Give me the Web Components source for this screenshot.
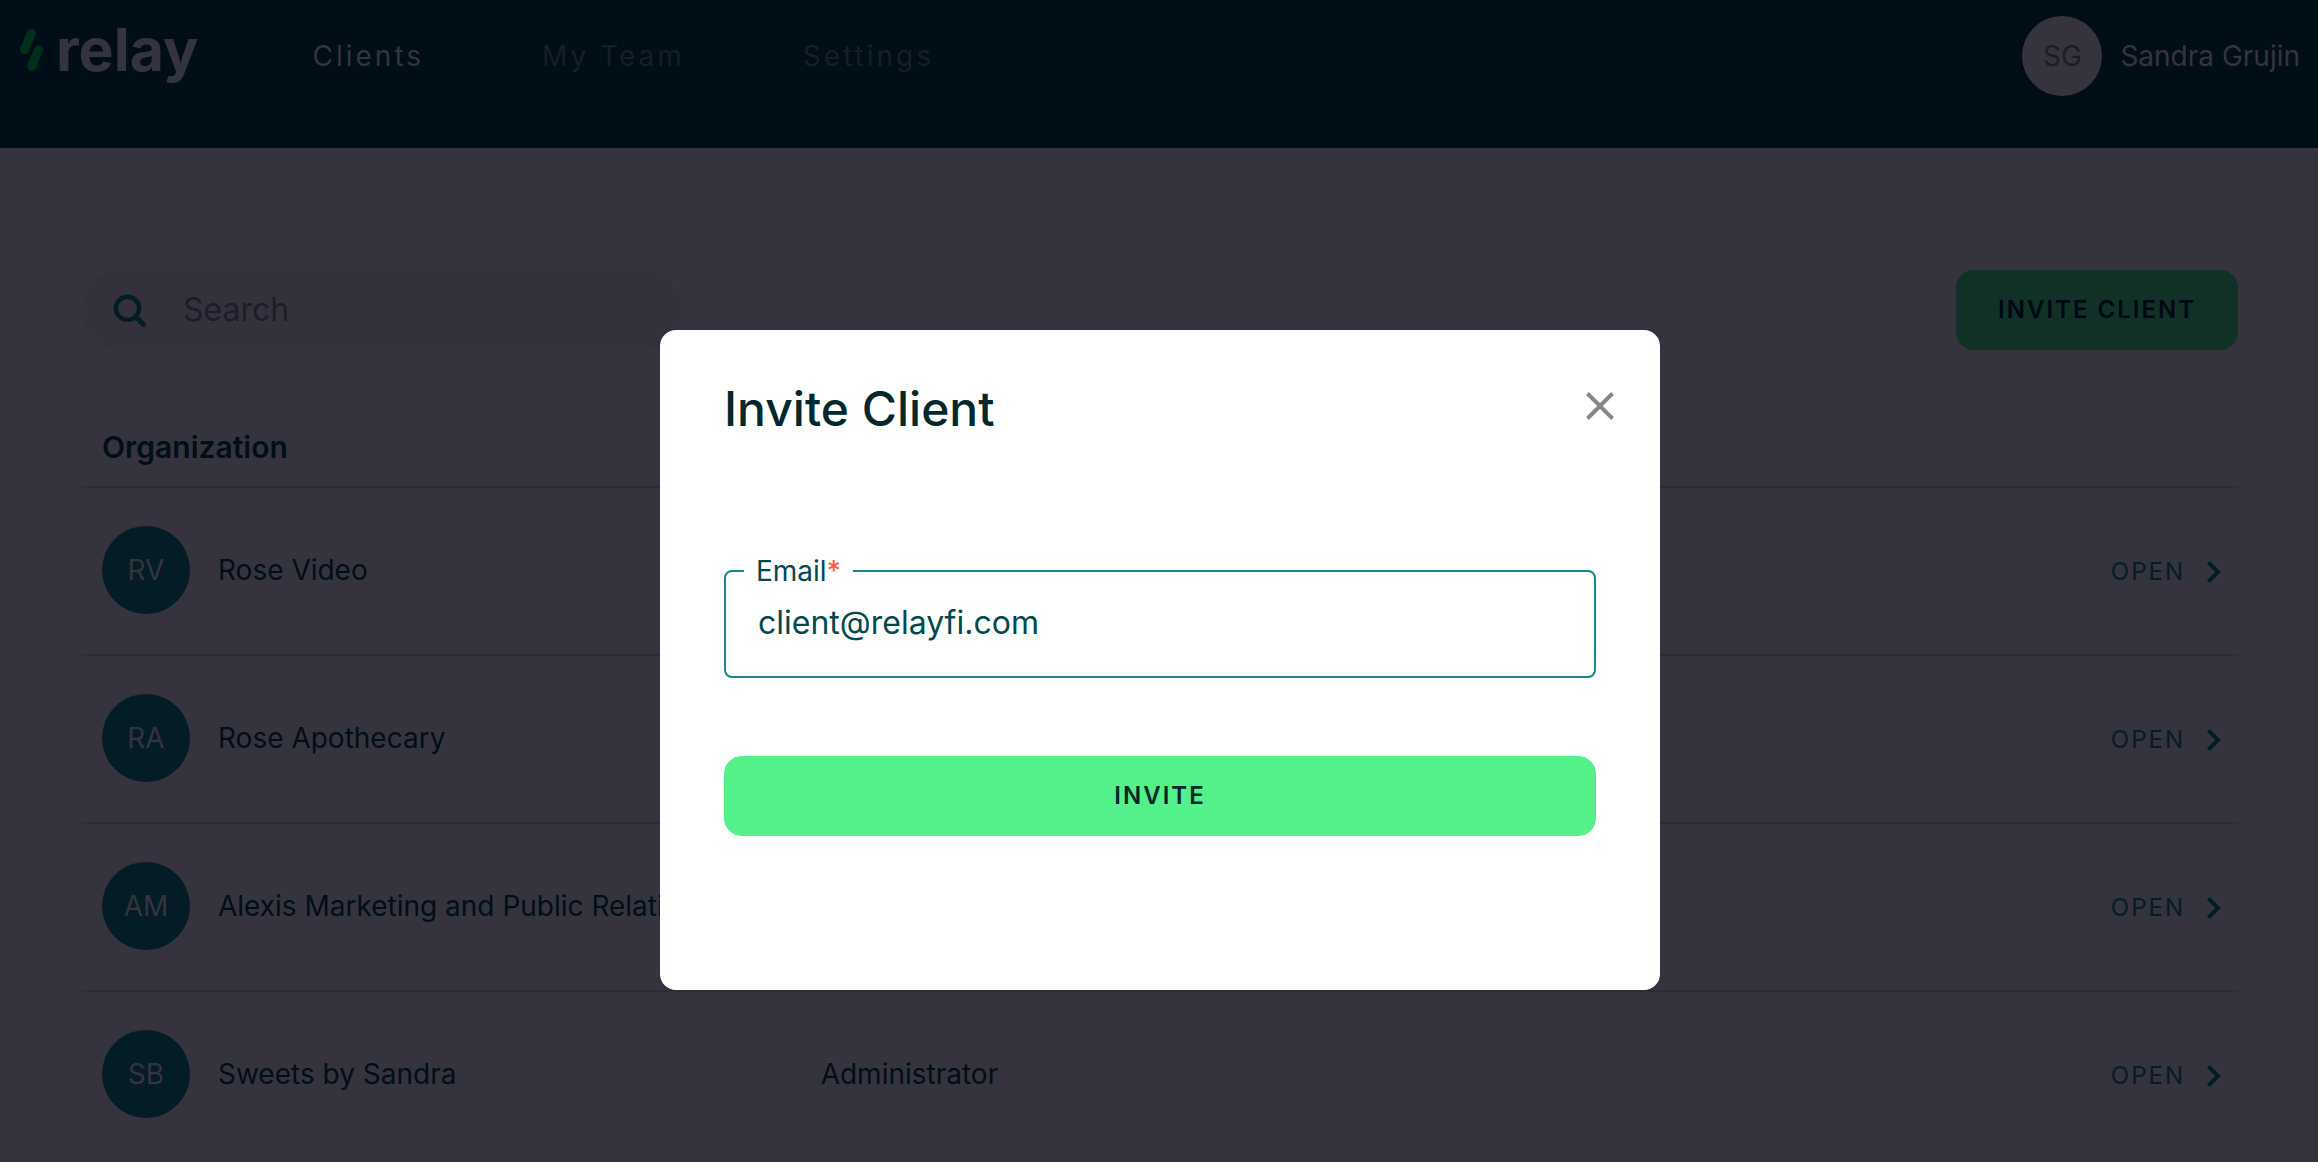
<!DOCTYPE html>
<html lang="en">
<head>
<meta charset="utf-8">
<title>Relay – Clients</title>
<style>
  :root {
    --page: #35343e;
    --header: #000e17;
    --line: #2d2c39;
    --field: #33323c;
    --ink: #000e18;
    --teal: #031c25;
    --muted: #1d1c28;
    --nav-idle: #161f29;
    --mark: #00301c;
    --cta: #113127;
    --cta-ink: #000815;
  }
  html, body { height: 100%; }
  body {
    margin: 0;
    overflow: hidden;
    background: var(--page);
    color: var(--ink);
    font: 28px/34px Inter, "Liberation Sans", sans-serif;
  }
</style>
</head>
<body>
<relay-app>
  <relay-header slot="header" user="Sandra Grujin" initials="SG">
    <relay-nav-link href="#clients" current>Clients</relay-nav-link>
    <relay-nav-link href="#team">My Team</relay-nav-link>
    <relay-nav-link href="#settings">Settings</relay-nav-link>
  </relay-header>
  <relay-card>
    <relay-toolbar>
      <relay-search></relay-search>
      <relay-button slot="action">INVITE CLIENT</relay-button>
    </relay-toolbar>
    <relay-client-table></relay-client-table>
  </relay-card>
  <relay-invite-dialog slot="dialog" heading="Invite Client"></relay-invite-dialog>
</relay-app>

<script>
  function define(name, render) {
    customElements.define(name, class extends HTMLElement {
      constructor() {
        super();
        this.attachShadow({ mode: "open" });
      }
      connectedCallback() {
        this.shadowRoot.innerHTML = "<style>*{box-sizing:border-box}</style>" + render(this);
      }
    });
  }

  define("relay-app", () => `
    <style>
      :host { display: flex; flex-direction: column; height: 100vh; }
      main { flex: 1; min-height: 0; overflow: hidden; padding: 60px 18px 0 20px; }
    </style>
    <slot name="header"></slot>
    <main><slot></slot></main>
    <slot name="dialog"></slot>`);

  define("relay-logo", () => `
    <style>
      :host { display: block; padding-bottom: 12px; }
      a { display: flex; align-items: center; gap: 12px; color: var(--page); text-decoration: none;
          font-size: 59px; line-height: 68px; font-weight: 700; }
      svg { display: block; }
    </style>
    <a href="#home">
      <svg width="24" height="44" viewBox="0 0 24 44" aria-hidden="true" fill="none" stroke="var(--mark)" stroke-width="9" stroke-linecap="round">
        <path d="M11.400 5.500 4.600 21.800M18.500 22.300 11.700 38.600"/>
      </svg>
      <span>relay</span>
    </a>`);

  define("relay-nav-link", el => `
    <style>
      :host { display: block; }
      a { color: ${el.hasAttribute("current") ? "var(--page)" : "var(--nav-idle)"}; text-decoration: none; letter-spacing: 3px; white-space: nowrap; }
    </style>
    <a href="${el.getAttribute("href")}"><slot></slot></a>`);

  define("relay-avatar", () => `
    <style>
      :host { display: flex; flex: none; align-items: center; justify-content: center;
              width: 88px; height: 88px; border-radius: 50%; background: var(--teal); color: var(--page); }
      :host([tone="light"]) { width: 80px; height: 80px; background: var(--page); color: var(--muted); }
    </style>
    <slot></slot>`);

  define("relay-header", el => `
    <style>
      :host { display: block; background: var(--header); color: var(--page); }
      header { padding: 16px 18px 52px 20px; }
      .row { display: flex; align-items: center; height: 80px; }
      nav { display: flex; gap: 118px; margin-left: 114px; }
      .user { display: flex; align-items: center; gap: 18px; margin-left: auto; }
    </style>
    <header>
      <div class="row">
        <relay-logo></relay-logo>
        <nav aria-label="Main"><slot></slot></nav>
        <div class="user">
          <relay-avatar tone="light">${el.getAttribute("initials")}</relay-avatar>
          <span>${el.getAttribute("user")}</span>
        </div>
      </div>
    </header>`);

  define("relay-card", () => `
    <style>:host { display: block; border: 2px solid var(--field); border-radius: 10px; padding: 60px; }</style>
    <slot></slot>`);

  define("relay-toolbar", () => `
    <style>:host { display: flex; align-items: center; justify-content: space-between; }</style>
    <slot></slot><slot name="action"></slot>`);

  define("relay-search", () => `
    <style>
      :host { display: block; width: 600px; }
      label { display: flex; align-items: center; gap: 36px; height: 80px; padding: 0 30px; border-radius: 40px; background: var(--field); }
      svg { flex: none; }
      input { flex: 1; min-width: 0; border: 0; padding: 0; outline: 0; background: none; font: inherit; font-size: 32px; line-height: 40px; color: var(--muted); }
      input::placeholder { color: var(--muted); opacity: 1; }
    </style>
    <label for="q">
      <svg width="35" height="35" viewBox="0 0 35 35" aria-hidden="true" fill="none" stroke="var(--teal)" stroke-linecap="round">
        <circle cx="15.500" cy="15.300" r="11.600" stroke-width="4.400"/>
        <path d="M24.500 24.500 31.500 31.500" stroke-width="5"/>
      </svg>
      <input id="q" type="search" placeholder="Search" aria-label="Search">
    </label>`);

  define("relay-button", () => `
    <style>
      :host { display: block; }
      button { display: block; width: 100%; height: 80px; padding: 0 42px; border: 0; border-radius: 18px;
               background: var(--cta); color: var(--cta-ink); font: inherit; font-size: 24px; font-weight: 600; letter-spacing: 2px; cursor: pointer; }
    </style>
    <button type="button"><slot></slot></button>`);

  const clients = [
    { initials: "RV", name: "Rose Video", role: "" },
    { initials: "RA", name: "Rose Apothecary", role: "" },
    { initials: "AM", name: "Alexis Marketing and Public Relations", role: "" },
    { initials: "SB", name: "Sweets by Sandra", role: "Administrator" }
  ];

  define("relay-client-table", () => `
    <style>
      :host { display: block; margin-top: 58px; }
      table { width: 100%; border-collapse: separate; border-spacing: 0; table-layout: fixed; }
      col.org { width: 718px; }
      th, td { padding: 0 20px; text-align: left; border-bottom: 2px solid var(--line); }
      th { height: 80px; font-size: 30px; font-weight: 600; }
      td { height: 168px; padding-bottom: 2px; white-space: nowrap; }
      td:last-child { padding: 2px 15px 0; }
      tbody tr:last-child td { border-bottom-color: transparent; }
      .org { display: flex; align-items: center; gap: 28px; }
      .open { display: flex; align-items: center; justify-content: flex-end; gap: 20px;
              color: var(--teal); text-decoration: none; font-size: 24px; letter-spacing: 2px; }
      svg { display: block; }
    </style>
    <table>
      <colgroup><col class="org"><col><col></colgroup>
      <thead><tr><th scope="col">Organization</th><th></th><th></th></tr></thead>
      <tbody>${clients.map(c => `
        <tr>
          <td><div class="org"><relay-avatar>${c.initials}</relay-avatar><span>${c.name}</span></div></td>
          <td>${c.role}</td>
          <td><a class="open" href="#open">OPEN
            <svg width="18" height="26" viewBox="0 0 18 26" aria-hidden="true" fill="none" stroke="var(--teal)" stroke-width="4"><path d="M3.400 3.400 13 13 3.400 22.600"/></svg>
          </a></td>
        </tr>`).join("")}
      </tbody>
    </table>`);

  define("relay-text-field", el => `
    <style>
      :host { display: block; color: #00494d; }
      fieldset { margin: 0; min-width: 0; border: 2px solid #1a8489; border-radius: 8px; padding: 0 18px 20px; }
      legend { padding: 0 12px; line-height: 34px; }
      .req { color: #ff5746; }
      input { display: block; width: 100%; height: 68px; border: 0; outline: 0; padding: 0 14px; background: none; color: inherit; font: inherit; font-size: 32px; line-height: 40px; }
    </style>
    <fieldset>
      <legend><label for="field">${el.getAttribute("label")}<span class="req">*</span></label></legend>
      <input id="field" type="email" required value="${el.getAttribute("value")}">
    </fieldset>`);

  define("relay-invite-dialog", el => `
    <style>
      :host { position: fixed; inset: 0; display: flex; justify-content: center; align-items: flex-start; padding: 330px 0 0 2px;
              --cta: #54f08a; --cta-ink: #02282b; }
      dialog { position: static; display: block; width: 1000px; max-width: 100%; margin: 0; border: 0; border-radius: 16px;
               padding: 50px 0 154px; background: #fff; color: #02282b; }
      header { display: flex; justify-content: space-between; align-items: flex-start; padding: 0 38px 0 64px; }
      h2 { margin: 0; font-size: 48px; line-height: 58px; font-weight: 500; }
      .close { display: flex; align-items: center; justify-content: center; width: 44px; height: 52px; padding: 0; border: 0; background: none; cursor: pointer; }
      form { display: flex; flex-direction: column; gap: 78px; padding: 116px 64px 0; }
    </style>
    <dialog open aria-labelledby="title">
      <header>
        <h2 id="title">${el.getAttribute("heading")}</h2>
        <button class="close" type="button" aria-label="Close">
          <svg width="28" height="28" viewBox="0 0 28 28" aria-hidden="true" stroke="#868686" stroke-width="4" stroke-linecap="square"><path d="M2.900 2.900 25.100 25.100M25.100 2.900 2.900 25.100"/></svg>
        </button>
      </header>
      <form>
        <relay-text-field label="Email" value="client@relayfi.com"></relay-text-field>
        <relay-button>INVITE</relay-button>
      </form>
    </dialog>`);
</script>
</body>
</html>
